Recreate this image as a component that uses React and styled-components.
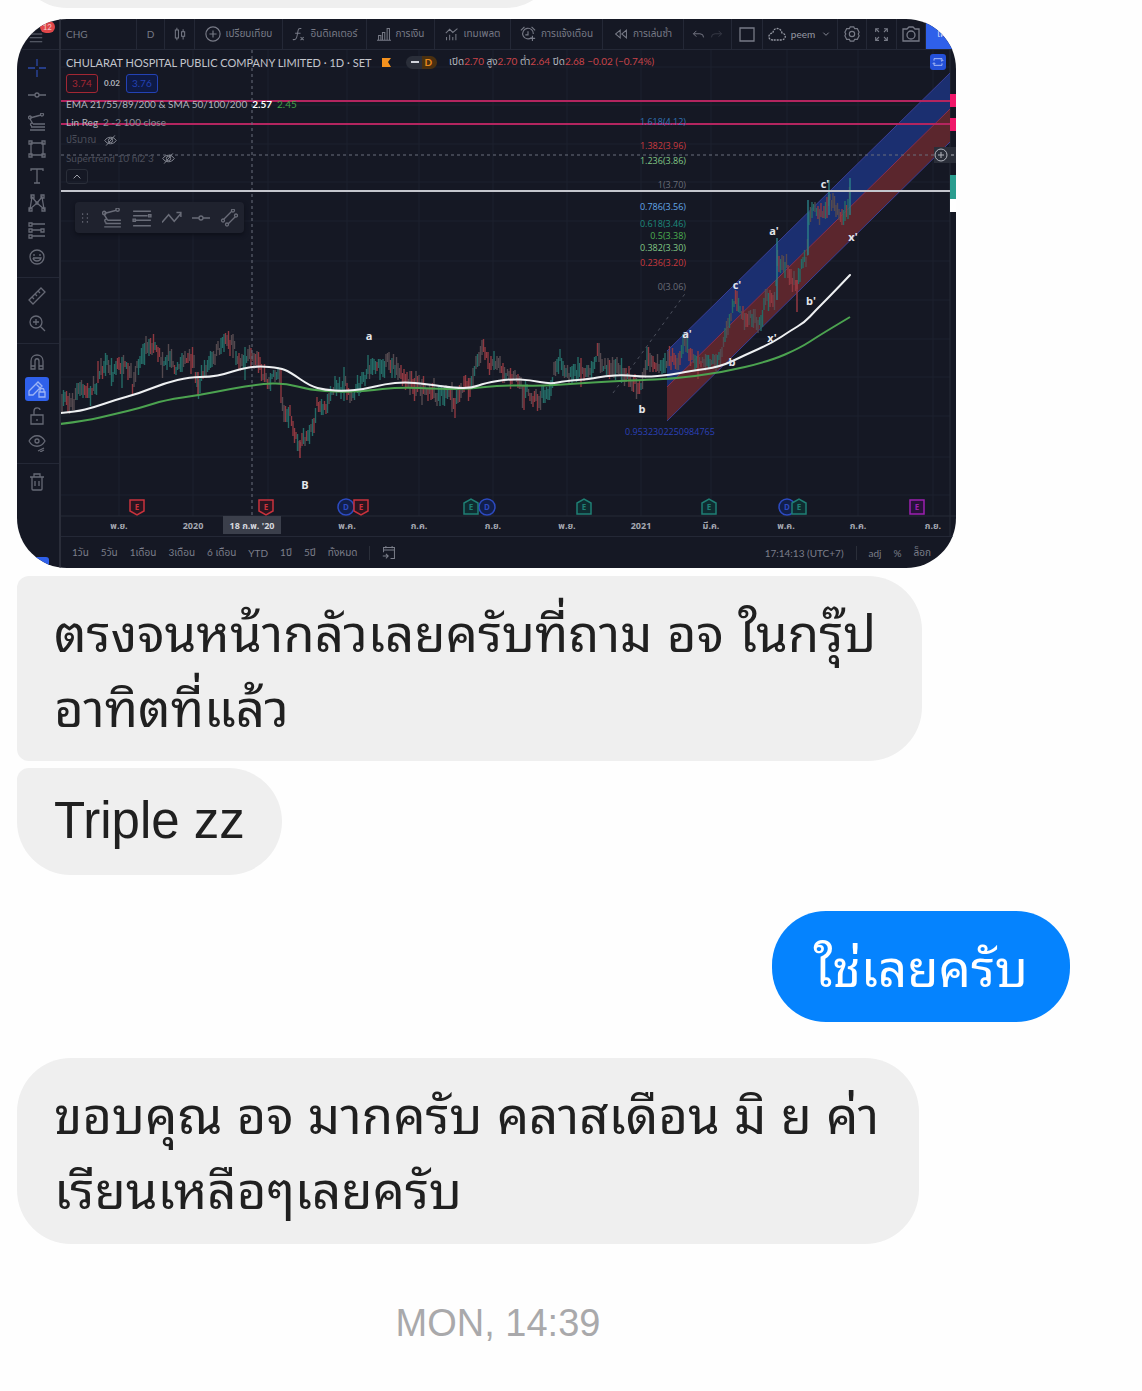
import React from "react";
import styled, { createGlobalStyle, css } from "styled-components";

const GlobalStyle = createGlobalStyle`
  * {
    box-sizing: border-box;
  }

  body {
    margin: 0;
    background: #fefefe;
    color: #202020;
    font-family: "Liberation Sans", Thonburi, "Noto Sans Thai Looped", Loma, "Noto Sans Thai", sans-serif;
  }
`;

/* ---------- icons, all drawn on an 18 x 18 box ---------- */

const icons = {
  menu: "M1 5h16M1 10h16M1 15h16",
  cross: "M9 0v7M9 11v7M0 9h7M11 9h7",
  line: "M0 9h7M11 9h7M9 7a2 2 0 1 0 0 4a2 2 0 1 0 0-4",
  fib: "M2 5L13 2M2 6l3 5M5 11h12M3 14h14M2 17h15M2 3a1 1 0 1 0 0 3a1 1 0 1 0 0-3M14 0a1 1 0 1 0 0 3a1 1 0 1 0 0-3M4 10a1 1 0 1 0 0 3",
  rect: "M3 3h12v12H3zM1 1h3v3H1zM14 1h3v3h-3zM1 14h3v3H1zM14 14h3v3h-3z",
  text: "M3 4V2h12v2M9 2v14M6 16h6",
  pattern: "M2 15L4 3l5 6l5-6l2 12l-7-6zM3 1h3v3H3zM13 1h3v3h-3zM1 14h3v3H1zM14 14h3v3h-3zM8 8h2v2H8z",
  predict: "M4 3h13M4 9h9M4 15h13M1 2h3v3H1zM1 8h3v3H1zM1 14h3v3H1zM13 8h3v3h-3z",
  smile: "M9 2a7 7 0 1 0 0 14a7 7 0 1 0 0-14M6 6v2M12 6v2M5 10h8c-1 4-7 4-8 0",
  ruler: "M1 13L13 1l4 4L5 17zM4 10l2 2M7 7l2 2M10 4l2 2",
  zoom: "M8 2a6 6 0 1 0 0 12a6 6 0 1 0 0-12M12 12l5 5M5 8h6M8 5v6",
  magnet: "M3 16V8c0-8 12-8 12 0v8h-4V8c0-3-4-3-4 0v8zM3 13h4M11 13h4",
  draw: "M1 11L10 2l4 4l-9 9H1zM8 4l4 4M11 12h6v5h-6zM12 12v-2c0-2 4-2 4 0v2",
  unlock: "M3 8h12v9H3zM6 8V4c0-4 6-4 6-1M9 12v2",
  eye: "M1 7c4-7 12-7 16 0c-4 7-12 7-16 0M9 5a2 2 0 1 0 0 4a2 2 0 1 0 0-4M10 17l6-3M12 18l4-2",
  trash: "M2 4h14M4 4v12q0 1 1 1h8q1 0 1-1V4M6 4V1h6v3M7 8v5M11 8v5",
  candles: "M3 4h4v10H3zM5 1v3M5 14v3M11 6h4v6h-4zM13 3v3M13 12v4",
  plus: "M9 1a8 8 0 1 0 0 16a8 8 0 1 0 0-16M5 9h8M9 5v8",
  fx: "M12 2c-4-1-4 1-5 7c-1 6-2 8-6 7M4 8h7M11 13l4 4M15 13l-4 4",
  bars: "M2 11h3v6H2zM7 7h3v10H7zM13 2h3v15h-3zM0 17h18",
  template: "M1 8l5-5l4 4l6-5M2 17v-4M6 17v-7M10 17v-4M14 17V9",
  alarm: "M13 13a6 6 0 1 1 2-4M1 5l4-4M13 1l4 4M9 6v4H6M14 11v6M11 14h6",
  rewind: "M8 4L2 9l6 5zM16 4l-6 5l6 5z",
  undo: "M6 4L2 8l4 4M2 8h9q5 0 5 5",
  redo: "M12 4l4 4l-4 4M16 8H7q-5 0-5 5",
  frame: "M2 3h14v13H2z",
  cloud: "M5 15C-1 15 0 8 5 8C5 2 13 2 14 8C19 9 18 15 13 15z",
  chevron: "M5 7l4 4l4-4",
  gear: "M7 1h4l1 2l3 0l2 4l-1 2l1 2l-2 4l-3 0l-1 2H7l-1-2l-3 0l-2-4l1-2l-1-2l2-4l3 0zM9 6a3 3 0 1 0 0 6a3 3 0 1 0 0-6",
  full: "M2 6V2h4M12 2h4v4M16 12v4h-4M6 16H2v-4M2 2l4 4M16 2l-4 4M16 16l-4-4M2 16l4-4",
  camera: "M1 4h4l2-2h4l2 2h4v12H1zM9 6a4 4 0 1 0 0 8a4 4 0 1 0 0-8",
  hidden: "M1 9c4-6 12-6 16 0c-4 6-12 6-16 0M9 6a3 3 0 1 0 0 6a3 3 0 1 0 0-6M3 16L15 2",
  up: "M4 11l5-5l5 5",
  grip: "M6 3v2M6 8v2M6 13v2M12 3v2M12 8v2M12 13v2",
  levels: "M1 3h16M1 7h13M3 11h14M1 16h16M15 6h2v2h-2zM1 10h2v2H1z",
  zigzag: "M0 13l6-7l5 6l6-7M13 4h4v4",
  channel: "M4 10L12 2M8 15L15 8M3 10a1 1 0 1 0 0 3a1 1 0 1 0 0-3M13 0a1 1 0 1 0 0 3a1 1 0 1 0 0-3M7 14a1 1 0 1 0 0 3a1 1 0 1 0 0-3M16 5a1 1 0 1 0 0 3a1 1 0 1 0 0-3",
  calendar: "M2 8V2h14v14h-5M2 5h14M1 13h6M5 10l3 3l-3 3M5 0v3M13 0v3",
  sync: "M3 7V4h12v3M3 11v3h12v-3M13 6l2 2l2-2M1 12l2-2l2 2",
};

const Icon = ({ name, size = 18, dashed }) => (
  <Glyph viewBox="0 0 18 18" $size={size} strokeDasharray={dashed ? "2 1" : undefined} aria-hidden="true">
    <path d={icons[name]} />
  </Glyph>
);

/* ---------- chart data ---------- */

const price = [
  [62, 403], [65, 395], [72, 406], [80, 387], [88, 395], [95, 387], [100, 370], [107, 363],
  [112, 373], [117, 367], [125, 368], [130, 373], [133, 387], [138, 363], [147, 345], [157, 347],
  [163, 363], [170, 355], [177, 370], [183, 360], [193, 363], [198, 387], [203, 373], [213, 360],
  [225, 338], [232, 343], [240, 363], [247, 357], [257, 355], [263, 377], [270, 380], [280, 370],
  [283, 413], [290, 417], [299, 448], [305, 437], [312, 430], [317, 405], [325, 407], [333, 388],
  [345, 385], [350, 397], [360, 383], [370, 367], [382, 365], [388, 363], [400, 372], [407, 385],
  [420, 387], [437, 395], [447, 392], [455, 403], [463, 385], [470, 387], [477, 357], [483, 350],
  [490, 367], [498, 362], [507, 375], [517, 378], [523, 390], [533, 397], [540, 397], [552, 390],
  [555, 367], [560, 360], [567, 375], [580, 370], [592, 372], [597, 352], [603, 368], [613, 367],
  [622, 370], [630, 383], [640, 387], [648, 360], [660, 370], [670, 358], [677, 363], [684, 340],
  [692, 360], [703, 362], [720, 360], [727, 327], [735, 300], [743, 317], [757, 317], [760, 323],
  [767, 297], [775, 303], [777, 257], [783, 262], [790, 275], [797, 287], [802, 263], [807, 257],
  [809, 215], [817, 210], [825, 218], [829, 200], [837, 208], [843, 218], [848, 205], [850, 190],
];

const fastAverage = [
  [60, 413], [75, 412], [95, 407], [115, 400], [140, 393], [165, 383], [190, 377], [210, 377],
  [225, 374], [240, 369], [258, 366], [280, 368], [290, 372], [310, 386], [325, 390], [345, 391],
  [365, 389], [385, 384], [405, 382], [425, 384], [455, 388], [472, 388], [485, 383], [510, 379],
  [530, 380], [550, 384], [565, 381], [590, 379], [605, 376], [625, 375], [645, 377], [670, 375],
  [690, 371], [720, 367], [745, 355], [772, 343], [790, 331], [805, 322], [815, 311], [830, 296],
  [850, 275],
];

const slowAverage = [
  [60, 424], [85, 421], [115, 414], [140, 408], [165, 400], [200, 395], [230, 389], [260, 384],
  [285, 383], [310, 390], [340, 392], [365, 391], [400, 387], [440, 389], [470, 389], [500, 385],
  [540, 386], [570, 384], [600, 382], [640, 380], [670, 379], [720, 373], [770, 361], [800, 348],
  [820, 335], [850, 317],
];

const levels = [
  ["1.618(4.12)", 125, "#3173b5"],
  ["1.382(3.96)", 149, "#c93a3f"],
  ["1.236(3.86)", 164, "#81c784"],
  ["1(3.70)", 188, "#6a6d78"],
  ["0.786(3.56)", 210, "#64a8e8"],
  ["0.618(3.46)", 227, "#1d8a7c"],
  ["0.5(3.38)", 239, "#4caf50"],
  ["0.382(3.30)", 251, "#81c784"],
  ["0.236(3.20)", 266, "#c93a3f"],
  ["0(3.06)", 290, "#6a6d78"],
];

const waves = [
  ["a", 369, 340], ["B", 305, 489], ["b", 642, 413], ["a'", 687, 338], ["b", 732, 366],
  ["c'", 737, 289], ["x'", 772, 342], ["a'", 774, 235], ["b'", 811, 305], ["c'", 825, 188],
  ["x'", 853, 241],
];

const months = [
  ["พ.ย.", 119], ["2020", 193], ["พ.ค.", 347], ["ก.ค.", 419], ["ก.ย.", 493],
  ["พ.ย.", 567], ["2021", 641], ["มี.ค.", 711], ["พ.ค.", 786], ["ก.ค.", 858], ["ก.ย.", 933],
];

const marks = [
  ["down", 137], ["down", 266], ["dividend", 346], ["down", 361], ["dividend", 487], ["up", 471],
  ["up", 584], ["up", 709], ["dividend", 787], ["up", 799], ["next", 917],
];

const markStyles = {
  down: { d: "M-7-7H7V4L0 8L-7 4Z", color: "#c9323c", fill: "#2b1520", letter: "E" },
  up: { d: "M-7 7H7V-4L0-8L-7-4Z", color: "#1f7f74", fill: "#0f2b30", letter: "E" },
  next: { d: "M-7-7H7V7H-7Z", color: "#9c1fb0", fill: "#28123a", letter: "E" },
  dividend: { d: "M0-8A8 8 0 1 0 0 8A8 8 0 1 0 0-8Z", color: "#2c4ac0", fill: "#121f49", letter: "D" },
};

const grid = {
  x: [119, 193, 268, 347, 419, 493, 567, 641, 711, 787, 858, 933],
  y: [67, 105, 144, 182, 221, 261, 300, 339, 377, 416, 457, 495],
};

// one thin bar every 1.5 units, walking along the price path
const makeCandles = () => {
  const candles = [];
  let seed = 7;
  const next = () => {
    seed = (seed * 16807) % 2147483647;
    return seed / 2147483647;
  };
  let i = 0;
  for (let x = 62; x <= 850; x += 1.5) {
    while (i < price.length - 2 && price[i + 1][0] < x) i += 1;
    const [x0, y0] = price[i];
    const [x1, y1] = price[i + 1];
    const t = Math.min(1, Math.max(0, (x - x0) / (x1 - x0)));
    const mid = y0 + (y1 - y0) * t + (next() - 0.5) * 8;
    const wide = next() > 0.9 ? 16 : 9;
    const kind = next() + (y1 < y0 ? 0.2 : -0.2);
    candles.push({
      x,
      top: Math.round(mid - 2 - next() * wide),
      bottom: Math.round(mid + 2 + next() * wide),
      color: kind > 0.65 ? "#246a66" : kind > 0.25 ? "#54494f" : "#8f3841",
    });
  }
  return candles;
};

const smooth = (points) => {
  let d = `M${points[0].join(" ")}`;
  for (let i = 1; i < points.length - 1; i += 1) {
    const [x, y] = points[i];
    const [nx, ny] = points[i + 1];
    d += `Q${x} ${y} ${(x + nx) / 2} ${(y + ny) / 2}`;
  }
  return `${d}L${points[points.length - 1].join(" ")}`;
};

const candles = makeCandles();

const Chart = () => (
  <Plot viewBox="61 50 895 486" role="img" aria-label="CHG 1D">
    <g stroke="#1c202e">
      {grid.x.map((x) => (
        <path key={x} d={`M${x} 50V516`} />
      ))}
      {grid.y.map((y) => (
        <path key={y} d={`M61 ${y}H950`} />
      ))}
      <path d="M61 516H956" stroke="#262a37" />
      <path d="M950 50V536" stroke="#262a37" />
    </g>

    <path d="M667 351L950 73V109L667 387Z" fill="#1b2f70" />
    <path d="M667 387L950 109V142L667 421Z" fill="#5b262d" />
    <path d="M667 351L950 73M667 421L950 142" stroke="#3b3f96" fill="none" />
    <path d="M667 387L950 109" stroke="#8a2f52" fill="none" />

    <g strokeWidth="1.4">
      {candles.map((c) => (
        <path key={c.x} d={`M${c.x} ${c.top}V${c.bottom}`} stroke={c.color} />
      ))}
      <path d="M777 238V300M808 200V255M829 180V215M850 178V215M808 210V250" stroke="#2a8088" />
      <path d="M797 280V312M300 440V458M198 372V395" stroke="#9d3a44" />
    </g>

    <path d="M61 101H956M61 124H956" stroke="#b3255f" strokeWidth="2" />
    <path d="M61 155H950M252 50V516" stroke="#6b6f7c" strokeDasharray="3 3" />
    <path d="M613 393L687 291" stroke="#4c505d" strokeDasharray="3 4" />
    <path d="M61 191H950" stroke="#c4c6cd" strokeWidth="2" />

    <path d={smooth(slowAverage)} stroke="#4ca350" strokeWidth="2" fill="none" />
    <path d={smooth(fastAverage)} stroke="#eef0f2" strokeWidth="2" fill="none" strokeLinecap="round" />

    {levels.map(([label, y, color]) => (
      <ChartText key={label} x="686" y={y} textAnchor="end" fill={color}>
        {label}
      </ChartText>
    ))}
    {waves.map(([label, x, y]) => (
      <ChartText key={`${label}${x}`} x={x} y={y} textAnchor="middle" fill="#e4e6ea" $size={11} $bold>
        {label}
      </ChartText>
    ))}
    <ChartText x="625" y="435" fill="#2b41b8">0.9532302250984765</ChartText>

    {marks.map(([type, x]) => {
      const { d, color, fill, letter } = markStyles[type];
      return (
        <g key={`${type}${x}`} transform={`translate(${x} 507)`}>
          <path d={d} stroke={color} fill={fill} strokeWidth="1.5" />
          <ChartText y="3" textAnchor="middle" fill={color} $size={8} $bold>
            {letter}
          </ChartText>
        </g>
      );
    })}

    <rect x="223" y="516" width="58" height="18" fill="#3b3f4b" />
    <ChartText x="252" y="529" textAnchor="middle" fill="#d6d8de" $bold>18 ก.พ. '20</ChartText>
    {months.map(([label, x]) => (
      <ChartText key={x} x={x} y="529" textAnchor="middle" fill="#a5a8b2" $bold>
        {label}
      </ChartText>
    ))}

    <path d="M950 94h6v13h-6zM950 118h6v13h-6z" fill="#f0186a" />
    <path d="M934 147h22v16h-22z" fill="#2a2e39" />
    <g fill="none" stroke="#b2b5be">
      <circle cx="941" cy="155" r="6" />
      <path d="M938 155h6M941 152v6M951 155h3" />
    </g>
    <path d="M950 175h6v24h-6z" fill="#2a9d8f" />
    <path d="M950 199h6v13h-6z" fill="#ffffff" />
  </Plot>
);

/* ---------- trading screen ---------- */

const tools = [
  ["cross", "line", "fib", "rect", "text", "pattern", "predict", "smile"],
  ["ruler", "zoom"],
  ["magnet", "draw", "unlock", "eye"],
  ["trash"],
];

const ranges = ["1วัน", "5วัน", "1เดือน", "3เดือน", "6 เดือน", "YTD", "1ปี", "5ปี", "ทั้งหมด"];

const TradingScreen = () => (
  <Screen>
    <Rail>
      <MenuButton aria-label="menu">
        <Icon name="menu" size={14} />
        <Badge>12</Badge>
      </MenuButton>
      {tools.map((group) => (
        <ToolGroup key={group[0]}>
          {group.map((name) => (
            <Tool key={name} aria-label={name} $active={name === "draw"} $tint={name === "cross"}>
              <Icon name={name} />
            </Tool>
          ))}
        </ToolGroup>
      ))}
      <RailTab />
    </Rail>

    <Workspace>
      <TopBar>
        <TopButton $start>CHG</TopButton>
        <TopButton>D</TopButton>
        <TopButton aria-label="candles"><Icon name="candles" size={14} /></TopButton>
        <TopButton><Icon name="plus" size={16} />เปรียบเทียบ</TopButton>
        <TopButton><Icon name="fx" size={14} />อินดิเคเตอร์</TopButton>
        <TopButton><Icon name="bars" size={14} />การเงิน</TopButton>
        <TopButton><Icon name="template" size={14} />เทมเพลต</TopButton>
        <TopButton><Icon name="alarm" size={16} />การแจ้งเตือน</TopButton>
        <TopButton><Icon name="rewind" size={14} />การเล่นซ้ำ</TopButton>
        <TopButton aria-label="undo"><Icon name="undo" size={13} /><Faded><Icon name="redo" size={13} /></Faded></TopButton>
        <TopButton aria-label="layout"><Icon name="frame" size={18} /></TopButton>
        <TopButton $bright><Icon name="cloud" size={18} dashed />peem<Icon name="chevron" size={12} /></TopButton>
        <TopButton aria-label="settings"><Icon name="gear" size={16} /></TopButton>
        <TopButton aria-label="fullscreen"><Icon name="full" size={15} /></TopButton>
        <TopButton aria-label="snapshot"><Icon name="camera" size={18} /></TopButton>
        <PublishButton>เผ</PublishButton>
      </TopBar>

      <ChartArea>
        <Chart />
        <Legend>
          <TitleRow>
            <Title>CHULARAT HOSPITAL PUBLIC COMPANY LIMITED · 1D · SET</Title>
            <Flag viewBox="0 0 9 9"><path d="M0 0h9L6 4l3 5H0z" /></Flag>
            <Pill><i />D</Pill>
            <Quote>
              เปิด<b>2.70</b> สูง<b>2.70</b> ต่ำ<b>2.64</b> ปิด<b>2.68 −0.02 (−0.74%)</b>
            </Quote>
          </TitleRow>
          <PriceRow>
            <PriceButton $color="#a32733" $fill="#1e1523">3.74</PriceButton>
            <strong>0.02</strong>
            <PriceButton $color="#2342b5" $fill="#0e1a45">3.76</PriceButton>
          </PriceRow>
          <LegendRow>
            EMA 21/55/89/200 &amp; SMA 50/100/200 <strong>2.57</strong> <em>2.45</em>
          </LegendRow>
          <LegendRow>Lin Reg <small>2 -2 100 close</small></LegendRow>
          <LegendRow $dim>ปริมาณ <Icon name="hidden" size={13} /></LegendRow>
          <LegendRow $dim>Supertrend 10 hl2 3 <Icon name="hidden" size={13} /></LegendRow>
          <Collapse aria-label="collapse"><Icon name="up" size={12} /></Collapse>
        </Legend>
        <Floating>
          <Icon name="grip" size={14} />
          <Icon name="fib" size={20} />
          <Icon name="levels" size={20} />
          <Icon name="zigzag" size={20} />
          <Icon name="line" size={18} />
          <Icon name="channel" size={18} />
        </Floating>
        <SyncButton aria-label="sync"><Icon name="sync" size={12} /></SyncButton>
      </ChartArea>

      <BottomBar>
        {ranges.map((range) => (
          <BottomButton key={range}>{range}</BottomButton>
        ))}
        <Divider />
        <BottomButton aria-label="go to date"><Icon name="calendar" size={14} /></BottomButton>
        <Clock>17:14:13 (UTC+7)</Clock>
        <Divider />
        <BottomButton>adj</BottomButton>
        <BottomButton>%</BottomButton>
        <BottomButton>ล็อก</BottomButton>
      </BottomBar>
    </Workspace>
  </Screen>
);

const App = () => {
  return (
    <>
      <GlobalStyle />
      <Thread>
        <Clipped>
          <Previous />
        </Clipped>
        <TradingScreen />
        <Bubble $tail="middle">
          ตรงจนหน้ากลัวเลยครับที่ถาม อจ ในกรุ๊ป
          <br />
          อาทิตที่แล้ว
        </Bubble>
        <Bubble $tail="last">Triple zz</Bubble>
        <Bubble $mine>ใช่เลยครับ</Bubble>
        <Bubble>
          ขอบคุณ อจ มากครับ คลาสเดือน มิ ย ค่า
          <br />
          เรียนเหลือๆเลยครับ
        </Bubble>
        <Timestamp>MON, 14:39</Timestamp>
      </Thread>
    </>
  );
};

const chartFont = `Lato, "Noto Sans Thai", "Open Sans", sans-serif`;

const Thread = styled.main`
  display: flex;
  flex-direction: column;
  align-items: flex-start;
  padding: 0 72px 40px 17px;
`;

const Clipped = styled.div`
  display: flex;
  align-items: flex-end;
  width: 100%;
  height: 8px;
  margin-bottom: 11px;
  overflow: hidden;
`;

const Previous = styled.div`
  flex: none;
  width: 539px;
  height: 112px;
  border-radius: 50px;
  background: #efefef;
`;

const Bubble = styled.p`
  max-width: 939px;
  margin: ${({ $tail }) => ($tail ? "0 0 7px" : "29px 0 7px")};
  padding: 21px 40px 15px 37px;
  border-radius: 54px;
  background: #efefef;
  font-size: 51px;
  line-height: 75px;

  ${({ $tail }) => $tail === "middle" && css`
    padding: 21px 46px 14px 37px;
    border-radius: 12px 54px 54px 12px;
  `}
  ${({ $tail }) => $tail === "last" && css`
    padding: 15px 37px 17px;
    border-radius: 12px 54px 54px 54px;
  `}
  ${({ $mine }) => $mine && css`
    align-self: flex-end;
    padding: 21px 42px 15px;
    background: #0583fe;
    color: #ffffff;
  `}
`;

const Timestamp = styled.time`
  align-self: center;
  margin-top: 46px;
  padding-right: 91px;
  color: #a9a9ab;
  font-size: 38px;
  line-height: 52px;
`;

const Screen = styled.section`
  display: flex;
  width: 100%;
  max-width: 939px;
  margin-bottom: 8px;
  overflow: hidden;
  border-radius: 50px;
  background: #151824;
  color: #7b7e8a;
  font-family: ${chartFont};
  font-size: 10px;
`;

const Glyph = styled.svg`
  flex: none;
  width: ${({ $size }) => $size}px;
  height: ${({ $size }) => $size}px;
  fill: none;
  stroke: currentColor;
  stroke-width: 1.3;
`;

const buttonReset = css`
  display: flex;
  align-items: center;
  justify-content: center;
  margin: 0;
  padding: 0;
  border: 0;
  background: none;
  color: inherit;
  font: inherit;
  white-space: nowrap;
`;

const Rail = styled.nav`
  display: flex;
  flex: none;
  flex-direction: column;
  align-items: center;
  width: 44px;
  border-right: 2px solid #2a2d39;
  color: #666975;
`;

const MenuButton = styled.button`
  ${buttonReset}
  position: relative;
  width: 100%;
  height: 31px;
  padding: 6px 4px 0 0;
  border-bottom: 1px solid #242836;
`;

const Badge = styled.span`
  position: absolute;
  top: 2px;
  right: 4px;
  padding: 0 3px;
  border-radius: 6px;
  background: #e0474a;
  color: #f3c9c9;
  font-size: 8px;
  line-height: 12px;
`;

const ToolGroup = styled.div`
  display: flex;
  flex-direction: column;
  align-items: center;
  width: 100%;
  padding: 5px 3px 6px 0;

  & + & {
    border-top: 1px solid #242836;
  }
`;

const Tool = styled.button`
  ${buttonReset}
  width: 24px;
  height: 24px;
  margin: 1px 0 2px;
  border-radius: 3px;
  color: ${({ $active, $tint }) => ($active ? "#9db4f5" : $tint ? "#2c49a8" : "inherit")};
  background: ${({ $active }) => ($active ? "#2f60ea" : "none")};
`;

const RailTab = styled.div`
  align-self: flex-end;
  width: 20px;
  height: 11px;
  margin: auto 10px 0 0;
  border-radius: 3px 3px 0 0;
  background: #2f60ea;
`;

const Workspace = styled.div`
  display: flex;
  flex: 1;
  flex-direction: column;
  min-width: 0;
`;

const TopBar = styled.header`
  display: grid;
  grid-template-columns:
    76fr 28fr 30fr 88fr 84fr 68fr 76fr 92fr
    81fr 48fr 31fr 75fr 29fr 30fr 29fr 30fr;
  height: 31px;
  border-bottom: 1px solid #242836;
`;

const TopButton = styled.button`
  ${buttonReset}
  gap: 5px;
  min-width: 0;
  overflow: hidden;
  border-right: 1px solid #242836;
  color: ${({ $bright }) => ($bright ? "#9598a3" : "#777a86")};

  ${({ $start }) => $start && css`
    justify-content: flex-start;
    padding-left: 5px;
  `}
`;

const Faded = styled.span`
  display: flex;
  opacity: 0.35;
`;

const PublishButton = styled.button`
  ${buttonReset}
  justify-content: flex-start;
  min-width: 0;
  padding-left: 11px;
  background: #2f60ea;
  color: #c5d2fa;
`;

const ChartArea = styled.div`
  position: relative;
`;

const Plot = styled.svg`
  display: block;
  width: 100%;
  height: auto;
`;

const ChartText = styled.text`
  font-family: "Open Sans", "Noto Sans Thai", sans-serif;
  font-size: ${({ $size }) => $size || 9}px;
  font-weight: ${({ $bold }) => ($bold ? 700 : 400)};
`;

const Legend = styled.div`
  position: absolute;
  top: 2px;
  left: 5px;
  display: flex;
  flex-direction: column;
  align-items: flex-start;
  color: #b2b5be;
`;

const TitleRow = styled.div`
  display: flex;
  align-items: center;
  height: 20px;
  white-space: nowrap;
`;

const Title = styled.h1`
  margin: 0 10px 0 0;
  color: #c3c5cc;
  font-size: 11px;
  font-weight: 400;
`;

const Flag = styled.svg`
  width: 9px;
  height: 9px;
  margin-right: 15px;
  fill: #f5921e;
`;

const Pill = styled.span`
  display: flex;
  align-items: center;
  gap: 6px;
  height: 13px;
  margin-right: 12px;
  padding: 0 5px;
  border-radius: 7px;
  background: linear-gradient(90deg, #2a2e39 50%, #4a3010 50%);
  color: #e8891c;
  font-weight: 700;

  i {
    width: 8px;
    height: 2px;
    background: #d1d4dc;
  }
`;

const Quote = styled.span`
  b {
    color: #c9444a;
    font-weight: 400;
  }
`;

const PriceRow = styled.div`
  display: flex;
  align-items: center;
  gap: 6px;
  height: 22px;
  margin-bottom: 1px;
  font-size: 8px;
`;

const PriceButton = styled.button`
  ${buttonReset}
  width: 32px;
  height: 19px;
  border: 1px solid ${({ $color }) => $color};
  border-radius: 3px;
  background: ${({ $fill }) => $fill};
  color: ${({ $color }) => $color};
  font-size: 10px;
`;

const LegendRow = styled.div`
  display: flex;
  align-items: center;
  gap: 5px;
  height: 18px;
  color: ${({ $dim }) => ($dim ? "#4b4e5a" : "#b2b5be")};
  white-space: nowrap;

  svg {
    margin-left: 3px;
    color: #8a8d98;
  }

  small {
    color: #8a8d98;
    font-size: 10px;
  }

  strong {
    color: #ffffff;
  }

  em {
    color: #43a047;
    font-style: normal;
  }
`;

const Collapse = styled.button`
  ${buttonReset}
  width: 22px;
  height: 15px;
  margin-top: 2px;
  border: 1px solid #2a2e39;
  border-radius: 3px;
`;

const Floating = styled.div`
  position: absolute;
  top: 152px;
  left: 14px;
  display: flex;
  align-items: center;
  justify-content: space-between;
  width: 169px;
  height: 31px;
  padding: 0 6px 0 3px;
  border-radius: 4px;
  background: #1f222e;
  box-shadow: 0 2px 4px #0d0f18;
  color: #696c78;
`;

const SyncButton = styled.button`
  ${buttonReset}
  position: absolute;
  top: 4px;
  right: 10px;
  width: 16px;
  height: 16px;
  border-radius: 3px;
  background: #2450d8;
  color: #b9c8f8;
`;

const BottomBar = styled.footer`
  display: flex;
  align-items: center;
  gap: 12px;
  height: 32px;
  padding: 0 25px 0 11px;
  border-top: 1px solid #242836;
`;

const BottomButton = styled.button`
  ${buttonReset}
`;

const Divider = styled.span`
  width: 1px;
  height: 14px;
  background: #2a2e39;
`;

const Clock = styled.span`
  margin-left: auto;
`;

export default App;
